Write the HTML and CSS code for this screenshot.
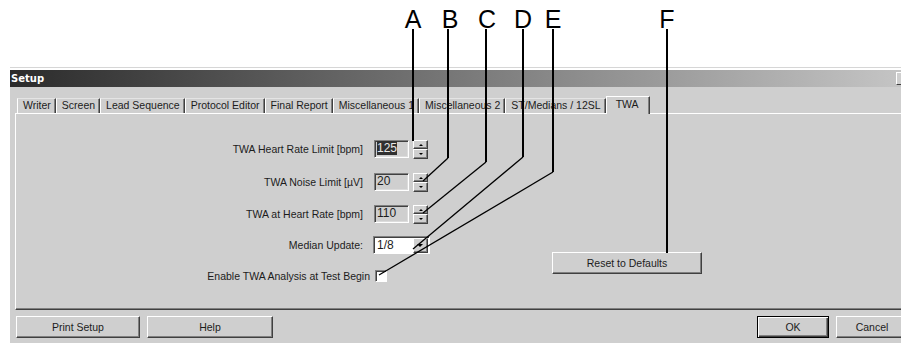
FILE: index.html
```html
<!DOCTYPE html>
<html lang="en">
<head>
  <meta charset="UTF-8">
  <title>Setup - TWA</title>
  <link rel="stylesheet" href="styles.css">
</head>
<body>
  <div class="page">
    <div class="window">
      <div class="titlebar">
        <span class="title">Setup</span>
        <span class="close"></span>
      </div>
      <div class="dialog">
        <div class="tabs">
          <div class="tab">Writer</div>
          <div class="tab">Screen</div>
          <div class="tab">Lead Sequence</div>
          <div class="tab">Protocol Editor</div>
          <div class="tab">Final Report</div>
          <div class="tab">Miscellaneous 1</div>
          <div class="tab">Miscellaneous 2</div>
          <div class="tab">ST/Medians / 12SL</div>
          <div class="tab active">TWA</div>
        </div>

        <div class="panel">
          <div class="form">
            <div class="row r1">
              <label class="lbl">TWA Heart Rate Limit [bpm]</label>
              <div class="edit"><span class="sel">125</span></div>
              <div class="spin"><span class="up"></span><span class="down"></span></div>
            </div>
            <div class="row r2">
              <label class="lbl">TWA Noise Limit [µV]</label>
              <div class="edit">20</div>
              <div class="spin"><span class="up"></span><span class="down"></span></div>
            </div>
            <div class="row r3">
              <label class="lbl">TWA at Heart Rate [bpm]</label>
              <div class="edit">110</div>
              <div class="spin"><span class="up"></span><span class="down"></span></div>
            </div>
            <div class="row r4">
              <label class="lbl lbl-combo">Median Update:</label>
              <div class="combo">
                <span class="combo-value">1/8</span>
                <span class="combo-btn"></span>
              </div>
            </div>
            <div class="row r5">
              <label class="lbl lbl-check">Enable TWA Analysis at Test Begin</label>
              <span class="check"></span>
            </div>
          </div>
          <div class="side">
            <button class="btn reset">Reset to Defaults</button>
          </div>
        </div>

        <div class="footer">
          <button class="btn print">Print Setup</button>
          <button class="btn help">Help</button>
          <button class="btn default ok">OK</button>
          <button class="btn cancel">Cancel</button>
        </div>
      </div>
    </div>

    <!-- callout letters and leader lines drawn over the dialog -->
    <svg class="callouts" width="901" height="343" viewBox="0 0 901 343">
      <text x="413" y="28">A</text>
      <text x="450" y="28">B</text>
      <text x="487" y="28">C</text>
      <text x="523" y="28">D</text>
      <text x="553" y="28">E</text>
      <text x="667" y="28">F</text>

      <path class="v" d="M413 29V141"/>
      <path class="v" d="M448 29V158"/>
      <path class="v" d="M486 29V162"/>
      <path class="v" d="M523 29V157"/>
      <path class="v" d="M553 29V172"/>
      <path class="v" d="M667 29V253"/>

      <path class="d" d="M448 158L423 181"/>
      <path class="d" d="M486 162L423 213"/>
      <path class="d" d="M523 157L413 249"/>
      <path class="d" d="M553 172L379 275"/>
    </svg>
  </div>
</body>
</html>
```

FILE: styles.css
```css
body {
  margin: 0;
  background: #fff;
  font-family: 'Liberation Sans', Arial, sans-serif;
  font-size: 10.5px;
  color: #1c1c1c;
}

.page {
  position: relative;
  width: 901px;
  height: 343px;
  overflow: hidden;
  padding-top: 67px;
  box-sizing: border-box;
}

/* window frame */
.window {
  margin-left: 10px;
  width: 900px;
  border-top: 1px solid #d6d6d6;
  padding-top: 2px;
}

.titlebar {
  height: 17px;
  display: flex;
  align-items: center;
  background: linear-gradient(to right, #2b2b2b, #c6c6c6);
}

.title {
  font-family: 'DejaVu Sans', sans-serif;
  font-weight: bold;
  font-size: 10px;
  color: #fff;
  padding-left: 1px;
}

.close {
  margin-left: auto;
  width: 14px;
  height: 13px;
  box-sizing: border-box;
  background: #cfcfcf;
  border: 1px solid;
  border-color: #fff #404040 #404040 #fff;
}

.dialog {
  background: #cfcfcf;
  height: 256px;
  padding: 9px 0 0 5px;
  box-sizing: border-box;
}

/* tabs */
.tabs {
  display: flex;
  align-items: flex-end;
  height: 17px;
  margin-left: 2px;
}

.tab {
  height: 15px;
  box-sizing: border-box;
  padding: 0 4px 0 5px;
  line-height: 13px;
  white-space: nowrap;
  border-top: 1px solid #e4e4e4;
  border-left: 1px solid #fff;
  border-right: 1px solid #404040;
  box-shadow: inset -1px 0 #808080;
}

.tab.active {
  position: relative;
  z-index: 1;
  height: 18px;
  margin-bottom: -1px;
  padding: 0 10px 0 9px;
  line-height: 14px;
  background: #cfcfcf;
  border-top: 1px solid #fff;
}

.panel {
  display: flex;
  height: 197px;
  box-sizing: border-box;
  padding: 25px 0 0 0;
  border-top: 1px solid #fff;
  border-left: 1px solid #fff;
  border-bottom: 1px solid #404040;
  box-shadow: inset 0 -1px #808080;
}

/* form rows */
.form {
  display: flex;
  flex-direction: column;
}

.row {
  display: flex;
  align-items: center;
  height: 20px;
}

.r1 { margin-bottom: 13px; }
.r2 { margin-bottom: 12px; }
.r3 { margin-bottom: 11px; }
.r4 { margin-bottom: 11px; }

.lbl {
  width: 347px;
  margin-right: 11px;
  text-align: right;
  white-space: nowrap;
}

.lbl-combo {
  margin-right: 10px;
}

.lbl-check {
  width: 354px;
  margin-right: 5px;
}

.edit {
  width: 35px;
  height: 18px;
  box-sizing: border-box;
  padding-left: 2px;
  font-size: 12px;
  line-height: 15px;
  border: 1px solid;
  border-color: #808080 #fff #fff #808080;
  box-shadow: inset 1px 1px #404040, inset -1px -1px #dcdcdc;
}

.sel {
  background: #303030;
  color: #e8e8e8;
}

.spin {
  display: flex;
  flex-direction: column;
  width: 15px;
  height: 19px;
  margin-left: 4px;
}

.spin span {
  flex: 1;
  position: relative;
  border: 1px solid;
  border-color: #fff #404040 #404040 #fff;
  box-shadow: inset -1px -1px #808080;
}

.spin span::after {
  content: "";
  position: absolute;
  left: 5px;
  top: 3px;
  border-left: 2px solid transparent;
  border-right: 2px solid transparent;
}

.spin .up::after {
  border-bottom: 2px solid #000;
}

.spin .down::after {
  border-top: 2px solid #000;
}

.combo {
  display: flex;
  width: 57px;
  height: 18px;
  box-sizing: border-box;
  background: #fff;
  border: 1px solid;
  border-color: #808080 #fff #fff #808080;
  box-shadow: inset 1px 1px #404040;
}

.combo-value {
  flex: 1;
  padding: 1px 0 0 3px;
  font-size: 12px;
  line-height: 15px;
}

.combo-btn {
  position: relative;
  width: 15px;
  margin: 1px 1px 0 0;
  box-sizing: border-box;
  background: #cfcfcf;
  border: 1px solid;
  border-color: #fff #404040 #404040 #fff;
  box-shadow: inset -1px -1px #808080;
}

.combo-btn::after {
  content: "";
  position: absolute;
  left: 3px;
  top: 5px;
  border-left: 3px solid transparent;
  border-right: 3px solid transparent;
  border-top: 3px solid #000;
}

.check {
  width: 12px;
  height: 12px;
  box-sizing: border-box;
  background: #fff;
  border: 1px solid;
  border-color: #808080 #fff #fff #808080;
  box-shadow: inset 1px 1px #404040;
}

.side {
  margin-left: 122px;
  padding-top: 113px;
}

/* buttons */
.btn {
  height: 22px;
  padding: 0;
  box-sizing: border-box;
  background: #cfcfcf;
  font-family: inherit;
  font-size: 10.5px;
  color: #1c1c1c;
  border: 1px solid;
  border-color: #fff #404040 #404040 #fff;
  box-shadow: inset -1px -1px #808080;
}

.btn.default {
  border-color: #000;
  box-shadow: inset 1px 1px #fff, inset -1px -1px #404040, inset -2px -2px #808080;
}

.reset { width: 150px; }

.footer {
  display: flex;
  margin-top: 6px;
  padding-left: 1px;
}

.print { width: 124px; }
.help { width: 126px; margin-left: 7px; }
.ok { width: 72px; margin-left: 484px; }
.cancel { width: 72px; margin-left: 7px; }

/* callout overlay */
.callouts {
  position: absolute;
  left: 0;
  top: 0;
  pointer-events: none;
}

.callouts text {
  font-family: 'Liberation Sans', Arial, sans-serif;
  font-size: 25px;
  text-anchor: middle;
  fill: #000;
}

.callouts path {
  fill: none;
  stroke: #000;
}

.callouts .v { stroke-width: 2; }
.callouts .d { stroke-width: 1.3; }
```
